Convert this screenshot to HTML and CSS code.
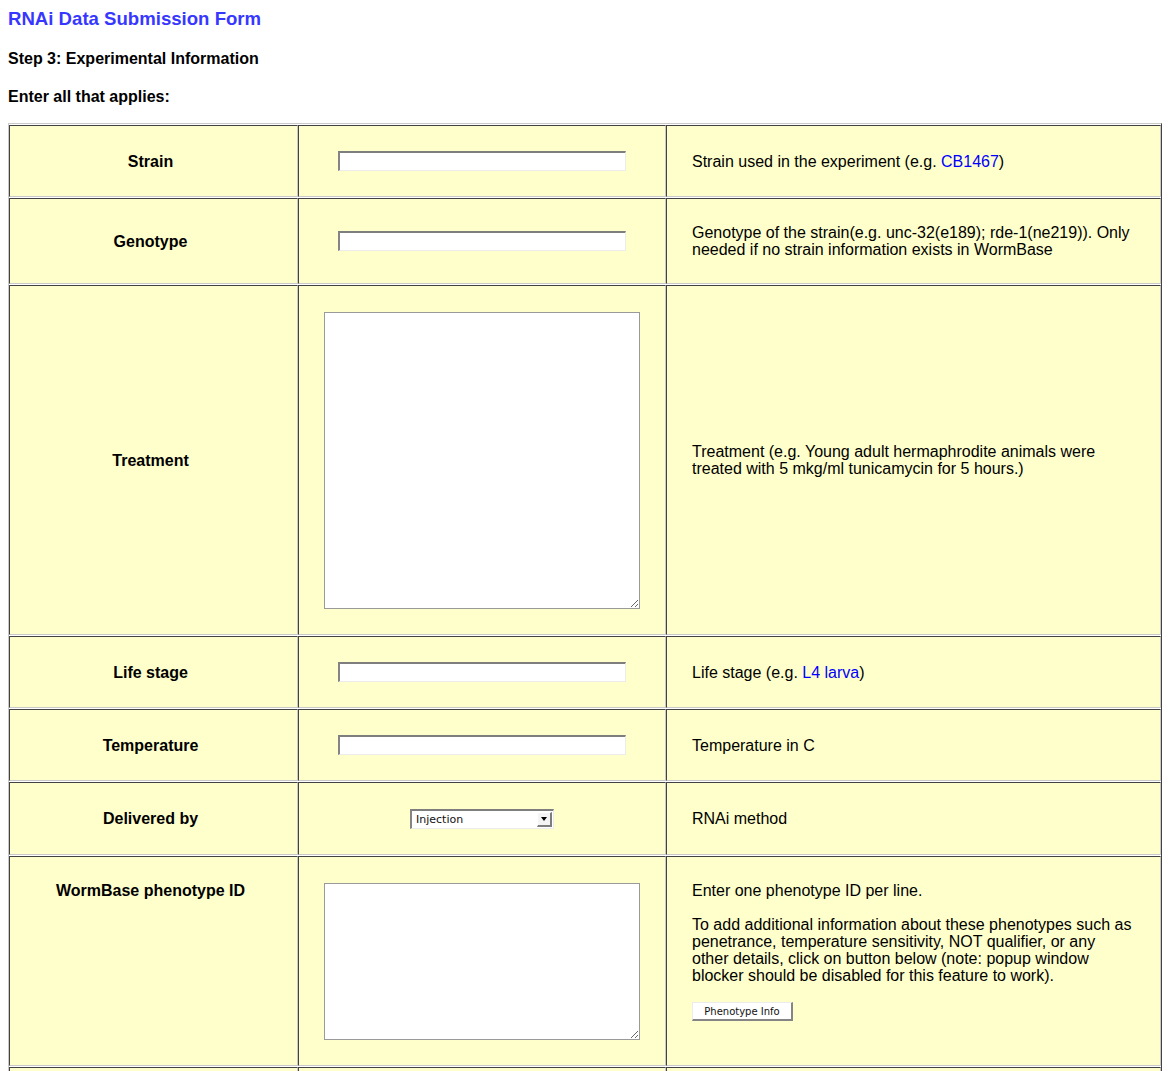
FILE: index.html
```html
<!DOCTYPE html>
<html>
<head>
<meta charset="utf-8">
<title>RNAi Data Submission Form</title>
<link rel="stylesheet" href="styles.css">
</head>
<body>
<div class="title">RNAi Data Submission Form</div>
<div class="step">Step 3: Experimental Information</div>
<div class="step enter">Enter all that applies:</div>
<table class="form">
  <colgroup>
    <col class="c1">
    <col class="c2">
    <col class="c3">
  </colgroup>
  <tr>
    <td class="label">Strain</td>
    <td class="field"><input class="text" type="text"></td>
    <td class="desc">Strain used in the experiment (e.g. <a href="#">CB1467</a>)</td>
  </tr>
  <tr>
    <td class="label">Genotype</td>
    <td class="field"><input class="text" type="text"></td>
    <td class="desc">Genotype of the strain(e.g. unc-32(e189); rde-1(ne219)). Only needed if no strain information exists in WormBase</td>
  </tr>
  <tr>
    <td class="label">Treatment</td>
    <td class="field"><textarea class="big"></textarea></td>
    <td class="desc">Treatment (e.g. Young adult hermaphrodite animals were treated with 5 mkg/ml tunicamycin for 5 hours.)</td>
  </tr>
  <tr>
    <td class="label">Life stage</td>
    <td class="field"><input class="text" type="text"></td>
    <td class="desc">Life stage (e.g. <a href="#">L4 larva</a>)</td>
  </tr>
  <tr>
    <td class="label">Temperature</td>
    <td class="field"><input class="text" type="text"></td>
    <td class="desc">Temperature in C</td>
  </tr>
  <tr>
    <td class="label">Delivered by</td>
    <td class="field"><span class="selectwrap"><select class="sel"><option>Injection</option><option>Feeding</option><option>Soaking</option><option>Transgene</option></select><span class="arrow"></span></span></td>
    <td class="desc">RNAi method</td>
  </tr>
  <tr class="top">
    <td class="label">WormBase phenotype ID</td>
    <td class="field"><textarea class="small"></textarea></td>
    <td class="desc">Enter one phenotype ID per line.<br><br>To add additional information about these phenotypes such as penetrance, temperature sensitivity, NOT qualifier, or any other details, click on button below (note: popup window blocker should be disabled for this feature to work).<br><br><button class="btn" type="button">Phenotype Info</button></td>
  </tr>
  <tr>
    <td class="label">&nbsp;</td>
    <td class="field"><input class="text" type="text"></td>
    <td class="desc">&nbsp;</td>
  </tr>
</table>
</body>
</html>
```
FILE: styles.css
```css
html, body {
  margin: 0;
  padding: 0;
  background: #ffffff;
}
body {
  margin: 8px;
  font-family: "Liberation Sans", Arial, Helvetica, sans-serif;
  color: #000;
}
.title {
  font-size: 18.6px;
  line-height: 21px;
  font-weight: bold;
  color: #3737ff;
}
.step {
  font-size: 16px;
  line-height: 18px;
  font-weight: bold;
  margin-top: 21px;
}
.enter {
  margin-top: 20px;
  margin-bottom: 17px;
}
.form {
  width: 100%;
  table-layout: fixed;
  border-collapse: separate;
  border-spacing: 0 1px;
  border-style: solid;
  border-width: 1px;
  border-color: #c9c9c9 #424242 #424242 #c9c9c9;
  font-size: 16px;
  line-height: 17px;
}
.c1 { width: 289px; }
.c2 { width: 368px; }
.form td {
  background: #ffffcc;
  padding: 25px;
  border-style: solid;
  border-width: 1px;
  border-color: #424242 #c9c9c9 #c9c9c9 #424242;
  vertical-align: middle;
}
.form tr.top td {
  vertical-align: top;
}
.form td.label {
  font-weight: bold;
  text-align: center;
  padding-left: 22px;
  padding-right: 28px;
}
.field {
  text-align: center;
}
.desc a {
  color: #0000ff;
  text-decoration: none;
}
.text {
  display: block;
  margin: 0 auto;
  width: 288px;
  height: 20px;
  box-sizing: border-box;
  background: #fff;
  border-style: solid;
  border-width: 2px 1px 1px 2px;
  border-color: #7e7e7e #ececec #ececec #858585;
  padding: 0 2px;
  font-size: 13px;
  font-family: "Liberation Sans", Arial, sans-serif;
}
textarea {
  display: block;
  margin: 1px auto 0;
  box-sizing: border-box;
  width: 316px;
  border: 1px solid #9a9a9a;
  background: #fff;
  font-family: "Liberation Mono", monospace;
  font-size: 13px;
}
.big { height: 297px; }
.small { height: 157px; }
.selectwrap {
  display: block;
  position: relative;
  width: 144px;
  height: 20px;
  margin: 1px auto 0;
}
.sel {
  -webkit-appearance: none;
  appearance: none;
  display: block;
  width: 144px;
  height: 20px;
  box-sizing: border-box;
  margin: 0;
  border-style: solid;
  border-width: 2px 1px 1px 2px;
  border-color: #7e7e7e #ececec #ececec #858585;
  background: #fff;
  padding: 0 0 0 4px;
  font-family: "DejaVu Sans", sans-serif;
  font-size: 11px;
  color: #111;
  text-align: left;
  border-radius: 0;
}
.arrow {
  position: absolute;
  right: 2px;
  top: 3px;
  width: 15px;
  height: 15px;
  box-sizing: border-box;
  background: #f4f4f4;
  border-style: solid;
  border-width: 1px 2px 2px 1px;
  border-color: #ffffff #7d7d7d #7d7d7d #ffffff;
  pointer-events: none;
}
.arrow::after {
  content: "";
  position: absolute;
  left: 3px;
  top: 4px;
  width: 0;
  height: 0;
  border-left: 3.5px solid transparent;
  border-right: 3.5px solid transparent;
  border-top: 4px solid #000;
}
.btn {
  display: inline-block;
  width: 101px;
  height: 19px;
  box-sizing: border-box;
  padding: 0;
  margin: 1px 0 0;
  background: #fff;
  border-style: solid;
  border-width: 1px 2px 2px 1px;
  border-color: #ececec #858585 #858585 #ececec;
  font-family: "DejaVu Sans", sans-serif;
  font-size: 10px;
  line-height: 15px;
  color: #111;
  vertical-align: top;
  border-radius: 0;
}
```
